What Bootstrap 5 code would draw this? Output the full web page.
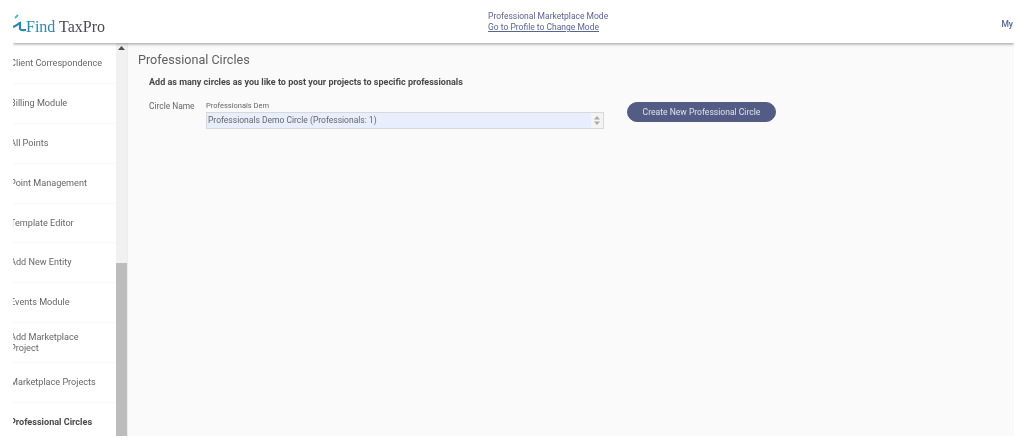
<!DOCTYPE html>
<html lang="en">
<head>
    <meta charset="UTF-8">
    <meta name="viewport" content="width=device-width, initial-scale=1.0">
    <title>Professional Circles</title>
    <link href="https://cdn.jsdelivr.net/npm/bootstrap@5.3.0/dist/css/bootstrap.min.css" rel="stylesheet">
    <style>
        html, body {
            height: 100%;
            overflow: hidden;
        }
        body {
            background: #fff;
            font-family: Roboto, "Liberation Sans", sans-serif;
            font-size: 9.1px;
        }
        .app-frame {
            width: 1001px;
            height: 436px;
            margin-left: 13px;
            overflow: hidden;
            background: #fafafa;
            color: #666;
            filter: blur(.35px);
        }
        .top-bar {
            height: 43px;
            background: #fff;
            box-shadow: 0 1px 3px rgba(0, 0, 0, .4);
            position: relative;
            z-index: 2;
        }
        .logo-text {
            font-family: "Liberation Serif", serif;
            font-size: 16px;
            color: #4a4a55;
            padding-top: 11px;
        }
        .logo-text span {
            color: #2d86ad;
        }
        .mode-box {
            margin-left: 383px;
            line-height: 11px;
            color: #5a6590;
            font-size: 8.5px;
            padding-top: 1px;
        }
        .mode-box a {
            color: #5a6590;
        }
        .my-link {
            color: #5a6590;
            font-size: 8.5px;
            font-weight: 500;
            margin-right: 1px;
            padding-top: 5px;
        }
        .side-panel {
            width: 103px;
            background: #fff;
            padding-top: 1px;
        }
        .side-item {
            height: 39.9px;
            margin-left: -3px;
            border-bottom: 1px solid #f7f7f7;
            color: #666;
            line-height: 11px;
        }
        .side-item.active-item {
            font-weight: 700;
            color: #484848;
        }
        .side-scroll {
            width: 12px;
            background: #f1f1f1;
            border-right: 1px solid #ececec;
        }
        .side-scroll-arrow {
            height: 20px;
            padding-top: 3px;
        }
        .side-scroll-space {
            height: 200px;
        }
        .side-scroll-thumb {
            background: #bdbdbd;
        }
        .main-area {
            padding: 8px 10px;
        }
        .page-title {
            font-size: 12.6px;
            font-weight: 400;
            color: #5f5f5f;
            line-height: 18px;
            margin-bottom: 7px;
        }
        .intro-line {
            margin: 0 0 9px 11px;
            font-weight: 700;
            font-size: 9.03px;
            line-height: 13px;
            color: #484848;
        }
        .circle-row {
            margin-left: 11px;
        }
        .circle-label {
            width: 57px;
            padding-top: 2px;
            font-size: 8.4px;
            line-height: 12px;
        }
        .circle-field {
            width: 398px;
        }
        .field-caption {
            font-size: 7.5px;
            line-height: 12px;
            padding-top: 2px;
            color: #666;
        }
        .circle-select {
            height: 17px;
            padding: 0 18px 0 1px;
            font-size: 8.5px;
            line-height: 15px;
            color: #666;
            border: 1px solid #d8d8d8;
            border-radius: 0;
            background-color: #e8eefd;
            background-size: 12px 15px;
            background-position: right 0 center;
            background-image: url("data:image/svg+xml,%3Csvg xmlns='http://www.w3.org/2000/svg' viewBox='0 0 12 15'%3E%3Crect width='12' height='15' fill='%23f3f3f3'/%3E%3Cpath fill='%23aaa' d='M6 3 9 6.500H3zM6 12 3 8.500H9z'/%3E%3C/svg%3E");
        }
        .circle-btn {
            margin: 4px 0 0 23px;
            width: 149px;
            height: 20px;
            padding: 0;
            font-size: 8.57px;
            line-height: 18px;
            color: #dfe2ec;
            background: #535c85;
            border: 1px solid #535c85;
            border-radius: 10px;
        }
    </style>
</head>
<body>
    <div class="app-frame d-flex flex-column">
        <header class="top-bar d-flex align-items-center flex-shrink-0">
            <svg width="13" height="20" viewBox="0 0 13 20" class="flex-shrink-0">
                <path d="M0 15C3 14 5 12 7 11V17C8 19 10 18 13 18" fill="none" stroke="#2d86ad" stroke-width="2.200"/>
                <path d="M2 6 5 3" fill="none" stroke="#4fb3d0" stroke-width="1.800"/>
            </svg>
            <div class="logo-text"><span>Find</span> TaxPro</div>
            <div class="mode-box flex-shrink-0">
                <div>Professional Marketplace Mode</div>
                <a href="#">Go to Profile to Change Mode</a>
            </div>
            <div class="my-link ms-auto">My</div>
        </header>
        <div class="d-flex flex-grow-1 overflow-hidden">
            <nav class="side-panel flex-shrink-0">
                <div class="side-item d-flex align-items-center">Client Correspondence</div>
                <div class="side-item d-flex align-items-center">Billing Module</div>
                <div class="side-item d-flex align-items-center">All Points</div>
                <div class="side-item d-flex align-items-center">Point Management</div>
                <div class="side-item d-flex align-items-center">Template Editor</div>
                <div class="side-item d-flex align-items-center">Add New Entity</div>
                <div class="side-item d-flex align-items-center">Events Module</div>
                <div class="side-item d-flex align-items-center">Add Marketplace<br>Project</div>
                <div class="side-item d-flex align-items-center">Marketplace Projects</div>
                <div class="side-item active-item d-flex align-items-center">Professional Circles</div>
            </nav>
            <div class="side-scroll flex-shrink-0 d-flex flex-column">
                <div class="side-scroll-arrow d-flex justify-content-center">
                    <svg width="7" height="4" viewBox="0 0 7 4"><path d="M3.500 0 7 4H0z" fill="#505050"/></svg>
                </div>
                <div class="side-scroll-space"></div>
                <div class="side-scroll-thumb flex-grow-1"></div>
            </div>
            <main class="main-area flex-grow-1">
                <h1 class="page-title">Professional Circles</h1>
                <p class="intro-line">Add as many circles as you like to post your projects to specific professionals</p>
                <div class="circle-row d-flex align-items-start">
                    <div class="circle-label flex-shrink-0">Circle Name</div>
                    <div class="circle-field flex-shrink-0">
                        <div class="field-caption">Professionals Dem</div>
                        <select class="form-select circle-select">
                            <option>Professionals Demo Circle (Professionals: 1)</option>
                        </select>
                    </div>
                    <button type="button" class="btn circle-btn flex-shrink-0">Create New Professional Circle</button>
                </div>
            </main>
        </div>
    </div>
    <script src="https://cdn.jsdelivr.net/npm/bootstrap@5.3.0/dist/js/bootstrap.bundle.min.js"></script>
</body>
</html>
